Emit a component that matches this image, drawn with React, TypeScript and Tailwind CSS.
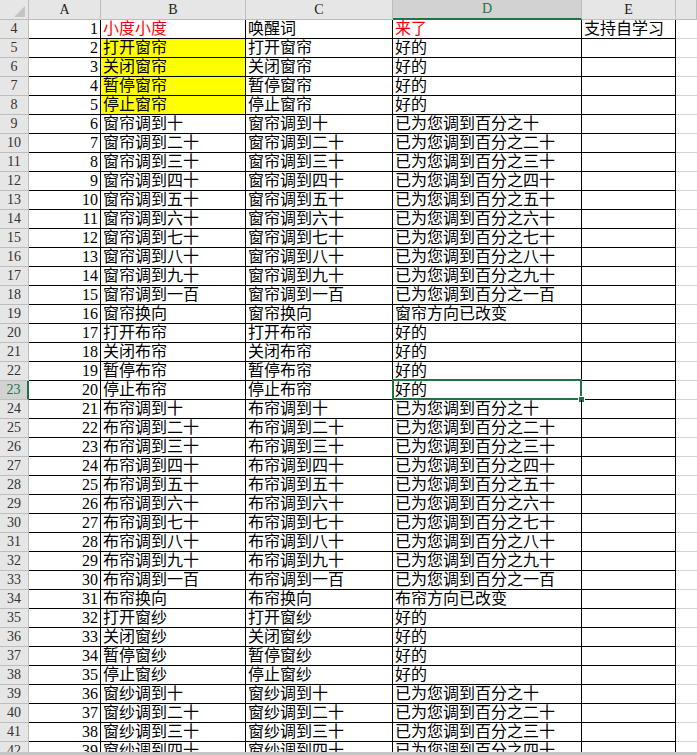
import React from 'react'

type Row = { b: string; c: string; d: string; e?: string; red?: boolean; yellow?: boolean }

const levels = ['十', '二十', '三十', '四十', '五十', '六十', '七十', '八十', '九十', '一百']

function curtainRows(name: string, dir: string): Row[] {
  const basic = ['打开', '关闭', '暂停', '停止'].map(v => ({ b: v + name, c: v + name, d: '好的' }))
  const pct = levels.map(n => ({ b: name + '调到' + n, c: name + '调到' + n, d: '已为您调到百分之' + n }))
  return [...basic, ...pct, { b: name + '换向', c: name + '换向', d: dir }]
}

const rows: Row[] = [
  { b: '小度小度', c: '唤醒词', d: '来了', e: '支持自学习', red: true },
  ...curtainRows('窗帘', '窗帘方向已改变').map((r, i) => (i < 4 ? { ...r, yellow: true } : r)),
  ...curtainRows('布帘', '布帘方向已改变'),
  ...curtainRows('窗纱', '').slice(0, 8),
]

const cols = ['A', 'B', 'C', 'D', 'E', '']
const SELECTED_ROW = 23

export default function App() {
  return (
    <div className="w-[697px] h-[755px] flex flex-col overflow-hidden bg-white text-black font-['Liberation_Serif','Noto_Sans_CJK_SC',serif]">
      <div className="flex-1 overflow-hidden">
        <div className="grid grid-cols-[29px_72px_145px_147px_189px_94px_1fr]">
          {/* column headers */}
          <div className="h-[20px] bg-[#e6e6e6] border-r border-b border-[#bdbdbd] flex items-end justify-end pr-[3px] pb-[2px]">
            <div className="w-0 h-0 border-l-[11px] border-l-transparent border-b-[11px] border-b-[#c4c4c4]" />
          </div>
          {cols.map(c => {
            const sel = c === 'D'
            return (
              <div
                key={c || 'F'}
                className={`h-[20px] flex items-center justify-center text-[14px] leading-none border-r border-[#bdbdbd] ${
                  sel ? 'bg-[#d2d2d2] text-[#217346] border-b-2 border-b-[#217346]' : 'bg-[#e6e6e6] text-[#222] border-b border-b-[#bdbdbd]'
                }`}
              >
                {c}
              </div>
            )
          })}

          {rows.map((r, i) => {
            const num = i + 4
            const sel = num === SELECTED_ROW
            const top = i === 0
            const cell = `h-[19px] flex items-end pl-[2px] text-[16px] leading-[18px] whitespace-nowrap overflow-visible border-r border-black ${top ? 'border-b border-black' : 'border-b border-black'}`
            return (
              <React.Fragment key={num}>
                <div
                  className={`h-[19px] flex items-center justify-center text-[14px] leading-none border-b border-[#bdbdbd] ${
                    sel ? 'bg-[#d2d2d2] text-[#217346] border-r-2 border-r-[#217346]' : 'bg-[#e6e6e6] text-[#333] border-r border-r-[#bdbdbd]'
                  }`}
                >
                  {num}
                </div>
                <div className={`${cell} justify-end pr-[2px] pl-0`}>{i + 1}</div>
                <div className={`${cell} ${r.yellow ? 'bg-[#ffff00]' : ''} ${r.red ? 'text-[#ff0000]' : ''}`}>{r.b}</div>
                <div className={cell}>{r.c}</div>
                <div className={`${cell} relative ${r.red ? 'text-[#ff0000]' : ''}`}>
                  {r.d}
                  {sel && (
                    <>
                      <div className="absolute left-[-1px] top-[-2px] right-[-1px] bottom-[-1px] border-2 border-[#217346]" />
                      <div className="absolute right-[-4px] bottom-[-4px] w-[7px] h-[7px] bg-white flex items-center justify-center">
                        <div className="w-[5px] h-[5px] bg-[#217346]" />
                      </div>
                    </>
                  )}
                </div>
                <div className={cell}>{r.e ?? ''}</div>
                <div className="h-[19px] border-b border-[#d4d4d4]" />
              </React.Fragment>
            )
          })}
        </div>
      </div>
      <div className="h-[3px] bg-[#c6c6c6]" />
    </div>
  )
}
